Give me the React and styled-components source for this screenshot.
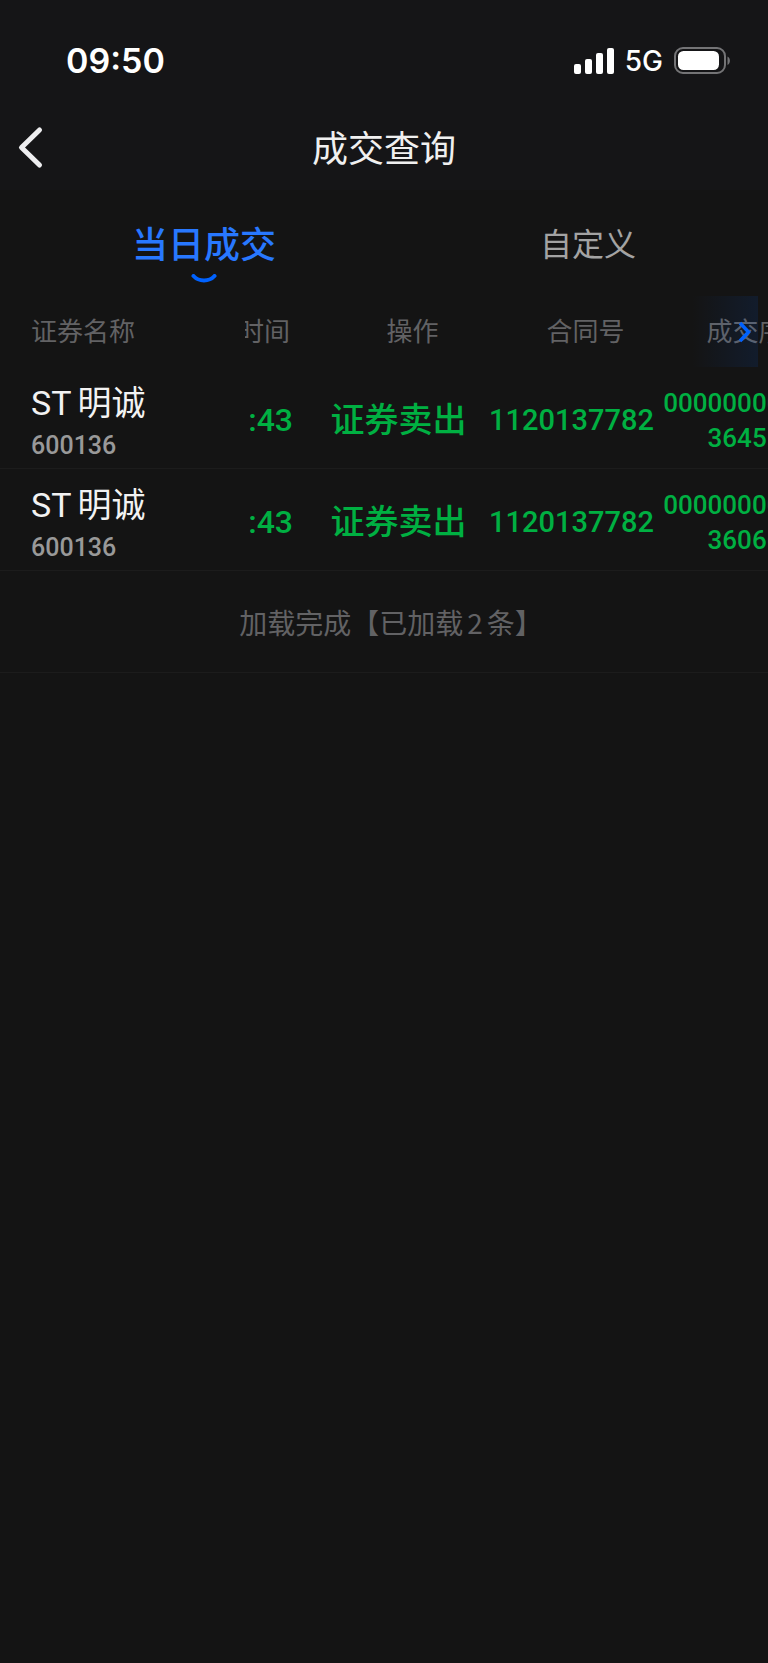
import React, { useState } from "react";
import styled, { createGlobalStyle } from "styled-components";

const GlobalStyle = createGlobalStyle`
  * { box-sizing: border-box; }
  html, body { margin: 0; padding: 0; background: #141414; }
  body {
    font-family: "Noto Sans CJK SC", sans-serif;
    color: #f0f0f0;
    overflow-x: hidden;
  }
  button { margin: 0; padding: 0; border: 0; background: none; font: inherit; color: inherit; cursor: pointer; }
`;

const Screen = styled.div`
  min-height: 100vh;
  background: #141414;
`;

const TopArea = styled.header`
  background: #151517;
  padding-bottom: 4px;
`;

const StatusBar = styled.div`
  display: flex;
  align-items: center;
  justify-content: space-between;
  height: 108px;
  padding: 14px 38px 0 66px;
  font-family: Inter, "Liberation Sans", sans-serif;
  color: #fff;
`;

const Clock = styled.time`
  font-size: 34px;
  font-weight: 600;
  line-height: 40px;
`;

const StatusIcons = styled.div`
  display: flex;
  align-items: center;
  gap: 11px;
  font-size: 28px;
  font-weight: 500;
  line-height: 40px;

  svg { display: block; }
`;

const NavBar = styled.nav`
  display: grid;
  grid-template-columns: 60px 1fr 60px;
  align-items: center;
  height: 78px;
`;

const BackButton = styled.button`
  display: flex;
  align-items: center;
  height: 78px;
  padding-left: 17px;
`;

const Title = styled.h1`
  margin: 0;
  padding-bottom: 3px;
  text-align: center;
  font-size: 36px;
  font-weight: 400;
  line-height: 52px;
`;

const Tabs = styled.div`
  display: flex;
  height: 106px;
`;

const Tab = styled.button`
  flex: 1;
  display: flex;
  flex-direction: column;
  align-items: center;
  padding: 26px 0 0 24px;
  line-height: 52px;
  font-size: ${(p) => (p.$active ? 36 : 32)}px;
  font-weight: ${(p) => (p.$active ? 500 : 400)};
  color: ${(p) => (p.$active ? "#2878ff" : "#a3a3a3")};

  svg { display: block; margin-top: 6px; }
`;

const TableArea = styled.section`
  position: relative;
`;

const Scroller = styled.div`
  overflow-x: auto;
  scrollbar-width: none;
`;

const Table = styled.table`
  table-layout: fixed;
  width: 831px;
  border-collapse: separate;
  border-spacing: 0;
`;

const Col = styled.col`
  width: ${(p) => p.$width}px;
`;

const HeadCell = styled.th`
  height: 71px;
  padding: 0 0 4px ${(p) => (p.$name ? 31 : 28)}px;
  text-align: ${(p) => (p.$name ? "left" : "center")};
  font-size: 26px;
  font-weight: 400;
  line-height: 38px;
  white-space: nowrap;
  color: #626264;
`;

const ClippedHead = styled(HeadCell)`
  padding: 0 22px 4px 0;
`;

const Clip = styled.div`
  display: flex;
  justify-content: flex-end;
  overflow: hidden;
`;

const Cell = styled.td`
  height: 102px;
  padding: 4px 0 0;
  border-bottom: 1px solid #1c1c1c;
  text-align: center;
  white-space: nowrap;
  font-family: Roboto, "Noto Sans CJK SC", sans-serif;
  font-weight: 500;
  color: #00b042;
`;

const NameCell = styled(Cell)`
  padding: 12px 0 0 31px;
  text-align: left;
  font-weight: 400;
`;

const StockName = styled.div`
  display: flex;
  gap: 6px;
  font-size: 34px;
  line-height: 44px;
  color: #f2f2f2;
`;

const StockCode = styled.div`
  font-size: 25px;
  line-height: 42px;
  font-weight: 500;
  color: #999;
`;

const TimeCell = styled(Cell)`
  padding-right: 19px;
  font-size: 32px;
`;

const ActionCell = styled(Cell)`
  padding-top: 0;
  font-size: 34px;
`;

const ContractCell = styled(Cell)`
  font-size: 29px;
`;

const SerialCell = styled(Cell)`
  padding-top: 6px;
  font-size: 26px;
  line-height: 35px;
`;

const ScrollHint = styled.button`
  position: absolute;
  top: 0;
  right: 10px;
  display: flex;
  align-items: center;
  justify-content: flex-end;
  width: 66px;
  height: 71px;
  padding-right: 7px;
  background: linear-gradient(to right, rgba(0, 98, 255, 0), rgba(0, 98, 255, 0.1));
`;

const LoadStatus = styled.p`
  display: flex;
  align-items: center;
  justify-content: center;
  gap: 4px;
  height: 102px;
  margin: 0;
  border-bottom: 1px solid #1c1c1c;
  font-size: 28px;
  line-height: 40px;
  color: #626264;
`;

const HalfWidthEnd = styled.span`
  font-feature-settings: "halt";
`;

const trades = [
  { market: "ST", name: "明诚", code: "600136", time: ":43", action: "证券卖出", contract: "1120137782", serial: ["00000000000", "36451"] },
  { market: "ST", name: "明诚", code: "600136", time: ":43", action: "证券卖出", contract: "1120137782", serial: ["00000000000", "36066"] },
];

const SignalIcon = () => (
  <svg width="40" height="26" viewBox="0 0 40 26" fill="#fff" aria-hidden="true">
    <rect x="0" y="16" width="7" height="10" rx="2" />
    <rect x="11" y="11" width="7" height="15" rx="2" />
    <rect x="22" y="5" width="7" height="21" rx="2" />
    <rect x="33" y="0" width="7" height="26" rx="2" />
  </svg>
);

const BatteryIcon = () => (
  <svg width="56" height="28" viewBox="0 0 56 28" aria-hidden="true">
    <rect x="1" y="1" width="50" height="25" rx="8" fill="none" stroke="#747476" strokeWidth="2" />
    <rect x="4" y="4" width="41" height="19" rx="5.5" fill="#fff" />
    <path d="M53.5 9.5c3.2 1.2 3.2 7.3 0 8.5z" fill="#747476" />
  </svg>
);

const BackIcon = () => (
  <svg width="28" height="44" viewBox="0 0 28 44" fill="none" stroke="#eeeef0" strokeWidth="5" strokeLinecap="round" strokeLinejoin="round" aria-hidden="true">
    <path d="M22.5 5 4.500 22.500l18 17.500" />
  </svg>
);

const SmileIcon = () => (
  <svg width="26" height="10" viewBox="0 0 26 10" fill="none" stroke="#0062ff" strokeWidth="4" strokeLinecap="round" aria-hidden="true">
    <path d="M2.500 2C8 8 18 8 23.500 2" />
  </svg>
);

const NextIcon = () => (
  <svg width="13" height="22" viewBox="0 0 13 22" fill="none" stroke="#0062ff" strokeWidth="3.500" aria-hidden="true">
    <path d="M2 2l8.500 9L2 20" />
  </svg>
);

const tabNames = ["当日成交", "自定义"];

export default function App() {
  const [active, setActive] = useState(0);
  return (
    <Screen>
      <GlobalStyle />
      <TopArea>
        <StatusBar>
          <Clock>09:50</Clock>
          <StatusIcons>
            <SignalIcon />
            <span>5G</span>
            <BatteryIcon />
          </StatusIcons>
        </StatusBar>
        <NavBar>
          <BackButton aria-label="返回"><BackIcon /></BackButton>
          <Title>成交查询</Title>
        </NavBar>
      </TopArea>
      <main>
        <Tabs role="tablist">
          {tabNames.map((label, i) => (
            <Tab key={label} role="tab" aria-selected={active === i} $active={active === i} onClick={() => setActive(i)}>
              {label}
              {active === i && <SmileIcon />}
            </Tab>
          ))}
        </Tabs>
        <TableArea>
          <Scroller>
            <Table>
              <colgroup>
                <Col $width={245} />
                <Col $width={67} />
                <Col $width={173} />
                <Col $width={173} />
                <Col $width={173} />
              </colgroup>
              <thead>
                <tr>
                  <HeadCell $name scope="col">证券名称</HeadCell>
                  <ClippedHead scope="col"><Clip>时间</Clip></ClippedHead>
                  <HeadCell scope="col">操作</HeadCell>
                  <HeadCell scope="col">合同号</HeadCell>
                  <HeadCell scope="col">成交序号</HeadCell>
                </tr>
              </thead>
              <tbody>
                {trades.map((t, i) => (
                  <tr key={i}>
                    <NameCell>
                      <StockName><span>{t.market}</span><span>{t.name}</span></StockName>
                      <StockCode>{t.code}</StockCode>
                    </NameCell>
                    <TimeCell><Clip>{t.time}</Clip></TimeCell>
                    <ActionCell>{t.action}</ActionCell>
                    <ContractCell>{t.contract}</ContractCell>
                    <SerialCell>
                      {t.serial.map((line) => <div key={line}>{line}</div>)}
                    </SerialCell>
                  </tr>
                ))}
              </tbody>
            </Table>
          </Scroller>
          <ScrollHint aria-label="向右滚动"><NextIcon /></ScrollHint>
        </TableArea>
        <LoadStatus>
          <span>加载完成【已加载</span>
          <span>2</span>
          <HalfWidthEnd>条】</HalfWidthEnd>
        </LoadStatus>
      </main>
    </Screen>
  );
}
